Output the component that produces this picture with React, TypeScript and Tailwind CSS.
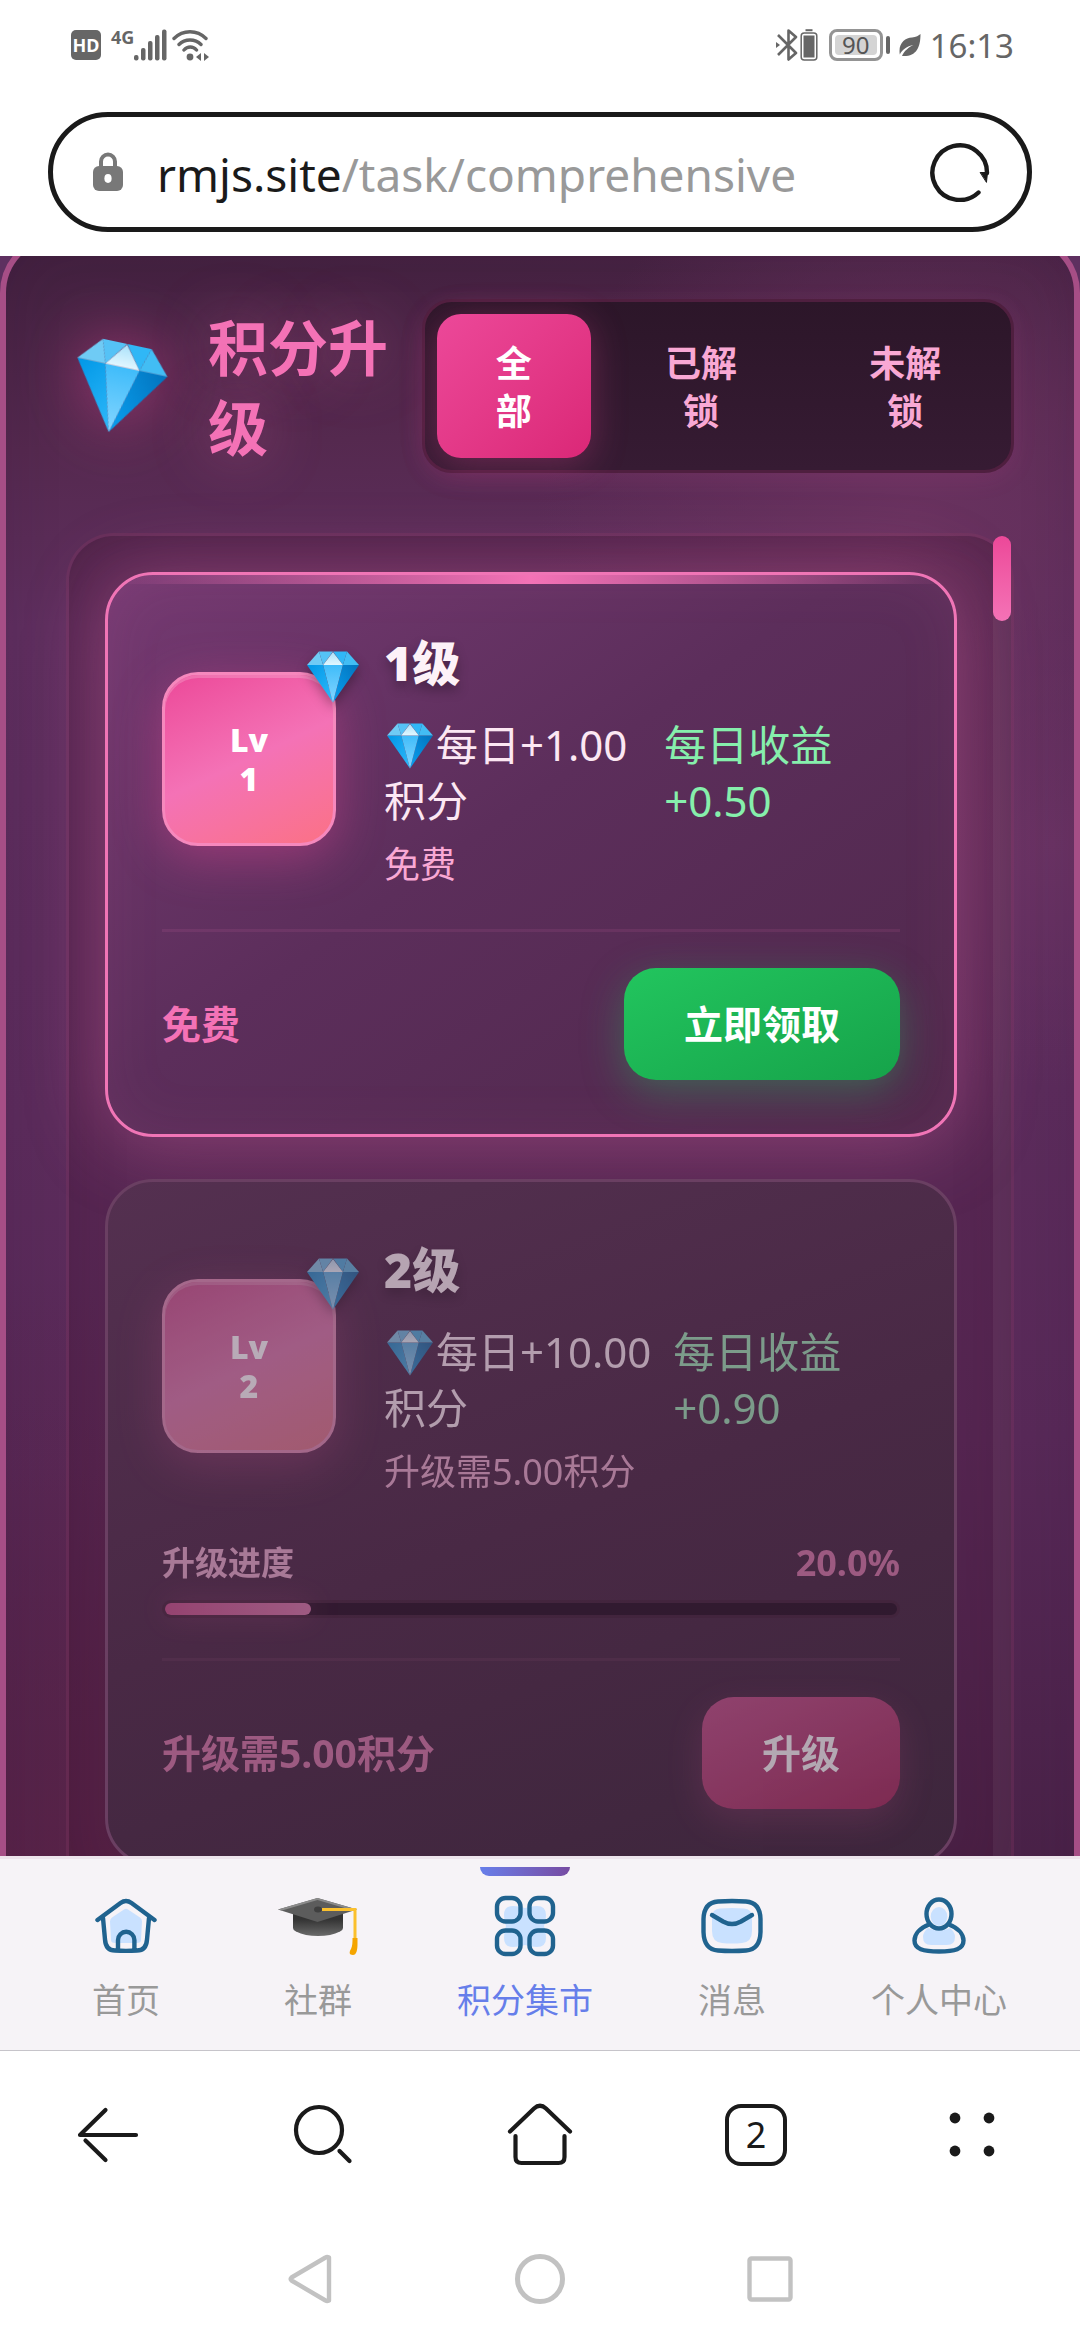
import { useState } from 'react';
import clsx from 'clsx';

// --- Types ---
type Level = {
    id: number;
    daily: string;
    income: string;
    cost: string;
    progress?: number;
    action: string;
    locked: boolean;
};

// --- Data ---
const filters = ['全部', '已解锁', '未解锁'];

const levels: Level[] = [
    { id: 1, daily: '1.00', income: '0.50', cost: '免费', action: '立即领取', locked: false },
    { id: 2, daily: '10.00', income: '0.90', cost: '升级需5.00积分', progress: 20, action: '升级', locked: true },
];

const Diamond = ({ className }: { className?: string }) => (
    <svg viewBox="0 0 100 100" className={className} aria-hidden="true">
        <defs>
            <linearGradient id="gemLeft" x1="0" y1="0" x2="1" y2="1">
                <stop offset="0" stopColor="#0097e6" />
                <stop offset="1" stopColor="#2fb9fa" />
            </linearGradient>
            <linearGradient id="gemRight" x1="1" y1="0" x2="0" y2="1">
                <stop offset="0" stopColor="#0273bd" />
                <stop offset="1" stopColor="#0aa0f0" />
            </linearGradient>
            <linearGradient id="gemMid" x1="0" y1="0" x2="0" y2="1">
                <stop offset="0" stopColor="#3fbcfa" />
                <stop offset="1" stopColor="#86d6ff" />
            </linearGradient>
            <linearGradient id="gemTop" x1="0" y1="0" x2="0" y2="1">
                <stop offset="0" stopColor="#a9e1fa" />
                <stop offset="1" stopColor="#e2f7ff" />
            </linearGradient>
        </defs>
        <path d="M0 27 31 27 50 99Z" fill="url(#gemLeft)" />
        <path d="M100 27 69 27 50 99Z" fill="url(#gemRight)" />
        <path d="M31 27H69L50 99Z" fill="url(#gemMid)" />
        <path d="M0 27 23 1 31 27Z" fill="#6fcbf5" />
        <path d="M23 1H50L31 27Z" fill="#55c2f6" />
        <path d="M50 1H77L69 27Z" fill="#30b7f6" />
        <path d="M77 1 100 27H69Z" fill="#42bdf4" />
        <path d="M50 2 69 27H31Z" fill="url(#gemTop)" />
    </svg>
);

function StatusBar() {
    return (
        <div className="flex h-[90px] items-center justify-between pr-[66px] pl-[71px] text-[#666]">
            <div className="flex items-center">
                <span className="flex size-[30px] items-center justify-center rounded-[5px] bg-[#666] text-[18px] leading-none font-bold text-white">HD</span>
                <span className="ml-[10px] self-start text-[18px] leading-4 font-bold">4G</span>
                <svg viewBox="0 0 34 32" className="h-8 w-[34px]" fill="currentColor">
                    <rect x="0" y="26" width="4.5" height="5.5" rx="2" />
                    <rect x="7" y="19" width="4.5" height="12.5" rx="2" />
                    <rect x="14" y="12" width="4.5" height="19.5" rx="2" />
                    <rect x="21" y="6" width="4.5" height="25.5" rx="2" />
                    <rect x="28" y="0.5" width="4.5" height="31" rx="2" />
                </svg>
                <svg viewBox="0 0 38 32" className="ml-1 h-8 w-[38px]" fill="none" stroke="currentColor" strokeWidth="3.4" strokeLinecap="round">
                    <path d="M2 9.5C11 .5 25 .5 34 9.5M7 15.5c6-6 16-6 22 0M12 21c3.500-4 9-4 12.500 0" />
                    <circle cx="18" cy="28" r="3.400" fill="currentColor" stroke="none" />
                    <path d="M24 28l5-4v8zM37 28l-5-4v8z" fill="currentColor" stroke="none" />
                </svg>
            </div>
            <div className="flex items-center">
                <svg viewBox="0 0 43 32" className="h-8 w-[43px]" fill="none" stroke="currentColor" strokeWidth="2.6">
                    <path d="M2 6 20 24 12.500 30.500V1.500L20 8 2 26" strokeLinejoin="round" />
                    <path d="M0 13v6l4-3z" fill="currentColor" stroke="none" />
                    <rect x="25.200" y="4" width="15.600" height="27" rx="3" strokeWidth="1.500" />
                    <rect x="27.500" y="6.500" width="11" height="22" fill="currentColor" stroke="none" />
                    <path d="M29.500 1.200h7" strokeWidth="2" />
                </svg>
                <span className="ml-[10px] flex h-8 w-[54px] items-center justify-center rounded-lg border-[3px] border-[#949494] bg-white p-[3px]">
                    <span className="flex h-5 flex-1 items-center justify-center rounded-sm bg-[#d4d4d4] text-[24px] leading-none text-[#555]">90</span>
                </span>
                <span className="ml-[3px] h-[18px] w-[4px] rounded-full bg-[#666]" />
                <svg viewBox="0 0 22 23" className="ml-[9px] h-[23px] w-[22px]" fill="currentColor">
                    <path d="M21.500 0C21.500 14 17 23 3 22 5 17 10 13 14.500 11 8 12 3 16 .8 20.500-1 9 6 4 13 3.500 17 3 20 1.500 21.500 0Z" />
                </svg>
                <span className="ml-[9px] text-[33px] leading-none">16:13</span>
            </div>
        </div>
    );
}

function AddressBar() {
    return (
        <div className="mx-12 mt-[22px] mb-6 flex h-[120px] items-center rounded-full border-[5px] border-[#1a1a1a] pr-[37px] pl-10">
            <svg viewBox="0 0 30 40" className="h-10 w-[30px] shrink-0">
                <path d="M8 16V9.500a7 7 0 0 1 14 0V16" fill="none" stroke="#787878" strokeWidth="4" />
                <rect y="14" width="30" height="25" rx="6" fill="#787878" />
                <ellipse cx="15" cy="26.500" rx="3.600" ry="4.400" fill="#fff" />
            </svg>
            <button type="button" aria-label="地址栏" className="ml-[34px] min-w-0 flex-1 truncate pt-1 text-left text-[46px] leading-[64px] text-[#999]">
                <span className="text-[#1a1a1a]">rmjs.site</span>/task/comprehensive
            </button>
            <button type="button" aria-label="刷新">
                <svg viewBox="0 0 60 60" className="size-[60px]" fill="none" stroke="#1a1a1a" strokeWidth="4.400" strokeLinecap="round">
                    <path d="M48.500 50.500A27.300 27.300 0 1 1 57 31" />
                    <path d="M50.500 30.500 57.500 30.500 56.500 40Z" fill="#1a1a1a" strokeWidth="1" strokeLinejoin="round" />
                </svg>
            </button>
        </div>
    );
}

function LevelCard({ level }: { level: Level }) {
    return (
        <article
            className={clsx(
                'relative overflow-hidden rounded-[48px] border-[3px] p-[54px]',
                level.locked
                    ? 'border-[#6a3f62] bg-linear-160 from-[#543050] via-[#492945] to-[#3d263c]'
                    : 'border-[#f075b6] bg-linear-145 from-[#753a72] via-[#5c2e5b] via-45% to-[#4f284b] shadow-[inset_0_0_60px_rgba(244,114,182,0.08)]'
            )}
        >
            {!level.locked && <div className="absolute inset-x-0 top-0 h-[9px] bg-linear-to-r from-transparent via-[#f472b6] to-transparent" />}
            <div className={clsx(level.locked && 'opacity-60 grayscale-[30%]')}>
                <div className="flex items-center">
                    <div className="relative flex size-[174px] shrink-0 items-center justify-center rounded-[36px] border-[3px] border-[#f688bd] bg-linear-155 from-[#ec4899] via-[#f472b6] to-[#fb7185] shadow-[0_12px_48px_rgba(236,72,153,0.4),inset_0_3px_0_rgba(255,255,255,0.2)]">
                        <span className="w-10 text-center text-[32px] leading-[39px] font-black text-white">{`Lv ${level.id}`}</span>
                        <Diamond className="absolute -top-6 -right-[26px] size-[52px] drop-shadow-[0_6px_6px_rgba(0,0,0,0.3)]" />
                    </div>
                    <div className="ml-12 min-w-0 flex-1">
                        <h2 className="mb-5 text-[48px] leading-[68px] font-black text-[#fdf2f8] [text-shadow:0_6px_12px_rgba(0,0,0,0.3)]">{`${level.id}级`}</h2>
                        <div className="mb-3 flex text-[42px] leading-[56px]">
                            <span className="text-[#fce7f3]">
                                <Diamond className="mx-[3px] -my-3 inline size-[46px] align-[4px]" />
                                {`每日+${level.daily}积分`}
                            </span>
                            <span className="text-[#86efac]">{`每日收益+${level.income}`}</span>
                        </div>
                        <p className="text-[36px] leading-[48px] text-[#f9a8d4]">{level.cost}</p>
                    </div>
                </div>
                {level.progress !== undefined && (
                    <div className="mt-11">
                        <div className="mb-[14px] flex justify-between leading-[46px] font-bold">
                            <span className="text-[33px] text-[#f9a8d4]">升级进度</span>
                            <span className="text-[36px] text-[#f472b6]">{`${level.progress.toFixed(1)}%`}</span>
                        </div>
                        <div role="progressbar" aria-label="升级进度" aria-valuenow={level.progress} className="h-[18px] rounded-full border-[3px] border-[#4a2040] bg-[#2a0f2a]">
                            <div className="h-full rounded-full bg-linear-to-r from-[#ec4899] to-[#f472b6] shadow-[0_0_30px_rgba(236,72,153,0.4)]" style={{ width: `${level.progress}%` }} />
                        </div>
                    </div>
                )}
                <div className="mt-10 flex items-center justify-between border-t-[3px] border-[#f472b6]/10 pt-9">
                    <span className="text-[39px] leading-[54px] font-bold text-[#f472b6]">{level.cost}</span>
                    <button
                        type="button"
                        className={clsx(
                            'h-28 rounded-[32px] px-[60px] text-[39px] font-bold text-white',
                            level.locked
                                ? 'bg-linear-155 from-[#e64898] to-[#cf2069] shadow-[0_12px_36px_rgba(236,72,153,0.3)]'
                                : 'bg-linear-155 from-[#22c55e] to-[#16a34a] shadow-[0_12px_42px_rgba(34,197,94,0.35)]'
                        )}
                    >
                        {level.action}
                    </button>
                </div>
            </div>
        </article>
    );
}

// --- Tab bar icons ---
const HomeIcon = () => (
    <svg viewBox="0 0 62 62" className="size-[62px]" fill="none" stroke="#20638f" strokeWidth="4.400" strokeLinecap="round" strokeLinejoin="round">
        <path d="M29 14.500q2-1.500 4 0l12 8q2 1.500 2 4L46 45q0 3-4 3H20q-4 0-4-3l-1-18.500q0-2.500 2-4Z" fill="#c9e1ff" stroke="none" />
        <path d="M2.500 25 25.500 8Q31 4 36.500 8L59.500 25M8 23l2 21.500C10.500 52 13.500 55.500 20 55.500q11 .8 22 0C48.500 55.500 51.500 52 52 44.500L54 23M23 54.500V45a8.200 8.200 0 0 1 16.400 0v9.500" />
    </svg>
);

const CapIcon = () => (
    <svg viewBox="0 0 80 62" className="h-[62px] w-20">
        <defs>
            <linearGradient id="capBase" x1="0" y1="0" x2="0" y2="1">
                <stop offset="0.300" stopColor="#333" />
                <stop offset="1" stopColor="#6a6a6a" />
            </linearGradient>
        </defs>
        <path d="M15 17V33q0 2 3 3.500 9 4.500 22 4.500t22-4.500q3-1.500 3-3.500V17Z" fill="url(#capBase)" />
        <path d="M39.500 3 79 14.500 39.500 27 0 14.500Z" fill="#5c5c5c" />
        <path d="M39.500 3 79 14.500l-4 1L39.500 5 4 15.500l-4-1Z" fill="#8b8b8b" />
        <ellipse cx="40" cy="14.500" rx="4" ry="3" fill="#3f3f3f" />
        <path d="M44 14.500H77V44" fill="none" stroke="#fbc02d" strokeWidth="3" />
        <path d="M74.500 43h5v6c0 6-1 11-4.500 11-4 0-4-3-2-6 1.500-3 1.500-7 1.500-11Z" fill="#f5a500" />
    </svg>
);

const GridIcon = () => (
    <svg viewBox="0 0 62 62" className="size-[62px]" fill="none" stroke="#20638f" strokeWidth="4.400">
        <path d="M10 20q0-9 9-9 6 0 12 2 6-2 12-2 9 0 9 9 0 6-2 11 2 6 2 12 0 9-9 9-6 0-12-2-6 2-12 2-9 0-9-9 0-6 2-12-2-5-2-11Z" fill="#c9e1ff" stroke="none" />
        <rect x="3" y="3" width="23.500" height="23.500" rx="8.500" />
        <rect x="35.500" y="3" width="23.500" height="23.500" rx="8.500" />
        <rect x="3" y="35.500" width="23.500" height="23.500" rx="8.500" />
        <rect x="35.500" y="35.500" width="23.500" height="23.500" rx="8.500" />
    </svg>
);

const MailIcon = () => (
    <svg viewBox="0 0 62 62" className="size-[62px]" fill="none" stroke="#20638f" strokeWidth="4.400" strokeLinecap="round">
        <path d="M11 22q0-8 8-8.500 12-1 24 0 8 .5 8 8.500v14q0 11-10 12-10 1-20 0-10-1-10-12Z" fill="#c9e1ff" stroke="none" />
        <path d="M2.500 24Q3 7.500 17 6.500q14-1 28 0Q59 7.500 59.500 24v13Q59 54.500 45 55.500q-14 1-28 0Q3 54.500 2.500 37ZM11 20l11 6.500q9 5 18 0L51 20" />
    </svg>
);

const UserIcon = () => (
    <svg viewBox="0 0 54 62" className="h-[62px] w-[54px]" fill="none" stroke="#20638f" strokeWidth="4.400">
        <ellipse cx="27" cy="21.500" rx="8.300" ry="9.500" fill="#c9e1ff" stroke="none" />
        <path d="M16 33q11 5 22 0 5 4 5 9 0 8-8 8H19q-8 0-8-8 0-5 5-9Z" fill="#c9e1ff" stroke="none" />
        <ellipse cx="27" cy="19" rx="12.500" ry="14.500" />
        <path d="M17 29.500C8 33 2.500 39 2.500 45.500c0 8.500 8.500 11 24.500 11s24.500-2.500 24.500-11C51.500 39 46 33 37 29.500" />
    </svg>
);

const tabs = [
    { name: '首页', icon: <HomeIcon /> },
    { name: '社群', icon: <CapIcon /> },
    { name: '积分集市', icon: <GridIcon />, active: true },
    { name: '消息', icon: <MailIcon /> },
    { name: '个人中心', icon: <UserIcon /> },
];

function TabBar() {
    return (
        <nav className="grid grid-cols-[192fr_192fr_222fr_192fr_222fr] border-t-[3px] border-b border-t-[#ede4ec] border-b-[#c6c4ca] bg-[#f6f3f7] px-[30px] pt-2 pb-[26px]">
            {tabs.map(tab => (
                <a
                    key={tab.name}
                    href="#"
                    className={clsx('relative flex flex-col items-center gap-[19px] pt-7 text-[34px] leading-[48px]', tab.active ? 'text-[#667eea]' : 'text-[#999]')}
                >
                    {tab.active && <span className="absolute top-0 h-[9px] w-[90px] rounded-b-[9px] bg-linear-to-r from-[#667eea] to-[#764ba2]" />}
                    {tab.icon}
                    {tab.name}
                </a>
            ))}
        </nav>
    );
}

function BrowserBar() {
    return (
        <div className="grid h-[168px] grid-cols-5 items-center justify-items-center text-[#1a1a1a]">
            <button type="button" aria-label="后退">
                <svg viewBox="0 0 66 66" className="size-[66px]" fill="none" stroke="currentColor" strokeWidth="4.200" strokeLinecap="round">
                    <path d="M61 33H5L30.500 8" strokeLinejoin="round" />
                    <path d="M30.500 58 10.500 38.500" />
                </svg>
            </button>
            <button type="button" aria-label="搜索">
                <svg viewBox="0 0 66 66" className="size-[66px]" fill="none" stroke="currentColor" strokeWidth="4.200" strokeLinecap="round">
                    <circle cx="28" cy="28" r="23" />
                    <path d="m48.500 49 10 10" />
                </svg>
            </button>
            <button type="button" aria-label="主页">
                <svg viewBox="0 0 66 66" className="size-[66px]" fill="none" stroke="currentColor" strokeWidth="4.200" strokeLinecap="round">
                    <path d="M3 29.500 27 6.500Q33 1 39 6.500L63 29.500" />
                    <path d="M8.500 34V55q0 6 6 6h37q6 0 6-6V34" />
                </svg>
            </button>
            <button type="button" aria-label="标签页" className="flex size-[62px] items-center justify-center rounded-2xl border-4 border-[#1a1a1a] text-[36px] leading-none">
                2
            </button>
            <button type="button" aria-label="菜单">
                <svg viewBox="0 0 66 66" className="size-[66px]" fill="currentColor">
                    <circle cx="16" cy="16" r="5.400" />
                    <circle cx="50" cy="16" r="5.400" />
                    <circle cx="16" cy="49" r="5.400" />
                    <circle cx="50" cy="49" r="5.400" />
                </svg>
            </button>
        </div>
    );
}

function SystemBar() {
    return (
        <div className="flex h-[121px] items-start justify-center gap-[180px] pt-[35px] text-[#c2c2c2]">
            <button type="button" aria-label="返回">
                <svg viewBox="0 0 50 50" className="size-[50px]" fill="none" stroke="currentColor" strokeWidth="4.400" strokeLinejoin="round">
                    <path d="M44 3.500V46.500q-2 1-3.500 0L6.500 26.500q-1.500-1.500 0-3L40.500 3.500q1.500-1 3.500 0Z" />
                </svg>
            </button>
            <button type="button" aria-label="桌面" className="size-[50px] rounded-full border-[5px] border-[#c2c2c2]" />
            <button type="button" aria-label="最近任务">
                <svg viewBox="0 0 50 50" className="size-[50px]" fill="none" stroke="currentColor" strokeWidth="4.400">
                    <rect x="4.500" y="4.500" width="41" height="41" rx="2" />
                </svg>
            </button>
        </div>
    );
}

export default function App() {
    const [filter, setFilter] = useState('全部');

    return (
        <div className="flex h-screen flex-col bg-white font-['Noto_Sans','Noto_Sans_CJK_SC',sans-serif]">
            <StatusBar />
            <AddressBar />
            <main className="min-h-0 flex-1 overflow-hidden bg-[#5e3060]">
                <section className="-mt-[23px] rounded-[60px] border-[6px] border-[#a64e86] bg-[radial-gradient(circle_at_85%_16%,#69325f_0%,transparent_22%),radial-gradient(circle_at_98%_35%,#6a3364_0%,transparent_16%),radial-gradient(circle_at_0%_100%,#5a2348_0%,transparent_34%),linear-gradient(178deg,#41203e_0%,#55294f_12%,#5f2f5f_22%,#5c2c5c_50%,#582958_70%,#462044_100%)] px-[60px] pt-[60px] pb-[60px] shadow-[inset_0_0_60px_rgba(40,10,50,0.12)]">
                    <header className="flex items-center pl-[6px]">
                        <div className="flex min-w-0 flex-1 items-center pt-1">
                            <Diamond className="size-[92px] shrink-0 rotate-12 drop-shadow-[0_0_30px_rgba(236,72,153,0.5)]" />
                            <h1 className="mr-4 ml-11 min-w-0 flex-1 text-[60px] leading-[80px] font-bold text-[#f472b6] [text-shadow:0_0_60px_rgba(244,114,182,0.4)]">积分升级</h1>
                        </div>
                        <div className="grid w-[592px] grid-cols-[153fr_208fr_187fr] gap-[6px] rounded-[30px] border-[3px] border-[#4f1f3f] bg-linear-to-b from-[#2c1629] to-[#361b33] p-3 shadow-[0_6px_24px_rgba(236,72,153,0.1)]">
                            {filters.map(name => (
                                <button
                                    key={name}
                                    type="button"
                                    onClick={() => setFilter(name)}
                                    className={clsx(
                                        'flex h-36 items-center justify-center rounded-3xl pt-1 text-[36px] leading-[48px] font-bold',
                                        filter === name
                                            ? 'bg-linear-135 from-[#ec4899] to-[#db2777] text-white shadow-[0_6px_36px_rgba(236,72,153,0.3)]'
                                            : 'text-[#f9a8d4]'
                                    )}
                                >
                                    <span className={name.length > 2 ? 'w-20' : 'w-10'}>{name}</span>
                                </button>
                            ))}
                        </div>
                    </header>
                    <div className="mt-[60px] flex rounded-[48px] border-[3px] border-[#f472b6]/10 bg-[#4a1838]/20 shadow-[inset_0_0_60px_rgba(40,10,30,0.2)]">
                        <div className="flex min-w-0 flex-1 flex-col gap-[42px] p-9">
                            {levels.map(level => (
                                <div key={level.id} className={clsx('rounded-[48px]', !level.locked && 'shadow-[0_6px_78px_rgba(244,114,182,0.34)]')}>
                                    <LevelCard level={level} />
                                </div>
                            ))}
                        </div>
                        <div className="w-[18px] shrink-0 rounded-t-full bg-white/5">
                            <div className="h-[85px] rounded-full bg-linear-to-b from-[#ec4899] to-[#f472b6]" />
                        </div>
                    </div>
                </section>
            </main>
            <TabBar />
            <BrowserBar />
            <SystemBar />
        </div>
    );
}
